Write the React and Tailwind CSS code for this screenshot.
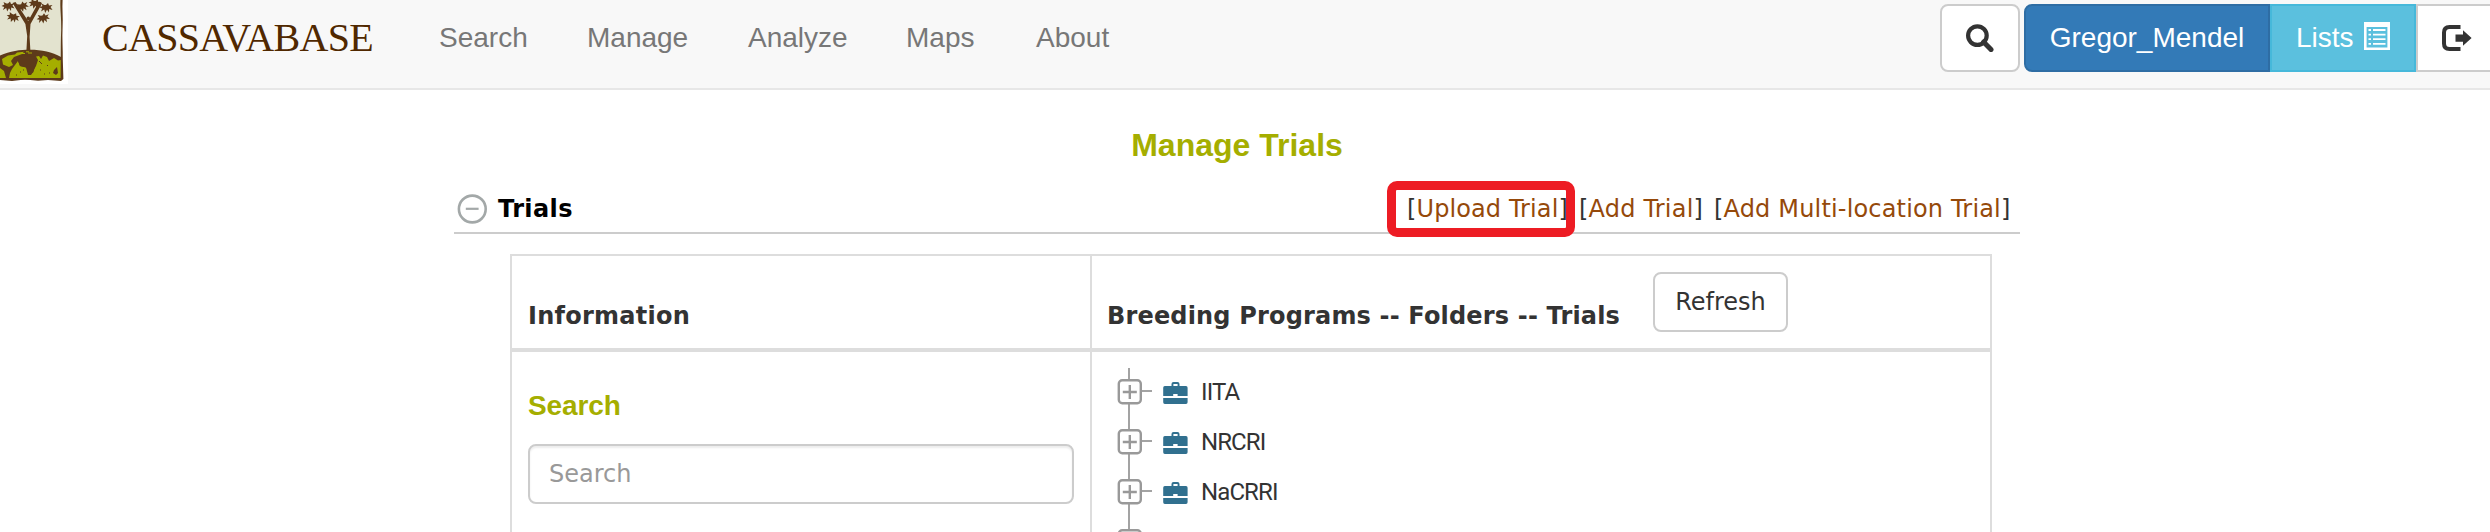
import React from "react";

const SANS = "font-['Liberation_Sans',Arial,sans-serif]";

function Leaf({ x, y, r = 0 }) {
  return (
    <g transform={`translate(${x} ${y}) rotate(${r})`} fill="#5d3a1a">
      <path d="M0 -2.5 L2 -4.5 L3 -2 L6.5 -2.5 L4.5 -0.5 L6.5 2.5 L3.2 1.5 L3 5 L1 2.2 L-0.8 5.4 L-1.8 2 L-5 4 L-3.8 1 L-6.5 0 L-3.6 -1.4 L-4.5 -4 L-1.6 -2.6 Z" />
    </g>
  );
}

function Logo() {
  return (
    <svg width="68" height="84" viewBox="0 0 68 84" className="block shrink-0">
      <rect width="68" height="84" fill="#fff" />
      <rect width="62" height="80" fill="#e3e3cf" />
      <path d="M0 55.5 C10 51 20 49.8 30 49.8 C42 49.8 52 52 61 57 L62 79.5 L0 79.5 Z" fill="#5d3a1a" />
      <path
        d="M8 55.5 L15 54.5 L17 52.5 L24 51.8 L22 54 L14 57 L11 61 L13 65 L9 67 L3 64.5 L2 59 Z M0 68 L4 71 L6 78 L0 78 Z M12 69 L18 61 L20 66 L26 67.5 L28 75 L31 75 L36 66 L38 60 L36 56.5 L39 56 L41 59 L43 55.5 L47 57 L49 61 L54 58 L58 60.5 L61 60 L61 78 L9 78 L10 73 Z"
        fill="#a5ae00"
      />
      <path d="M19 57 L25 55 L30 57 L34 56 L36 62 L35 66 L33.5 72 L31 74.5 L28.5 74 L26.5 67.5 L20 66 L18 61 Z M54 70 L57 67 L58 73 L56 75 L53 73 Z" fill="#5d3a1a" />
      <path d="M39 61 l3 3 M40 70 l1 0 M47 65 l1 1 M44 74 l1 0 M20 72 l1 0 M16 75 l1 0 M49 73 l1 0 M23 70 l1 0" stroke="#5d3a1a" strokeWidth="1" />
      <path d="M22 53.5 h3 M28 53 h4 M26 51.8 h3" stroke="#a5ae00" strokeWidth="1" />
      <path d="M26.4 51 L27.2 36 L25.4 24 L12.5 3 L15.5 2 L28.2 21 L39 1.5 L42 3.5 L30.5 24 L29.6 37 L30.4 51 Z" fill="#5d3a1a" />
      <circle cx="28.3" cy="18.4" r="1.8" fill="#5d3a1a" />
      <Leaf x={8} y={6} />
      <Leaf x={13} y={17} r={15} />
      <Leaf x={22} y={6.5} r={-20} />
      <Leaf x={35} y={3.5} r={10} />
      <Leaf x={46} y={7.5} />
      <Leaf x={43} y={18} r={-12} />
      <path d="M60.4 0 L62.6 0 C62 8 63.2 18 62.6 27 C62 38 63 50 62.8 60 L63.4 79 L61 81 L48 80 L38 80.7 L25 79.6 L12 81 L0 80 L0 78 L14 78.6 L30 78 L45 78.3 L60.6 78 C61 60 60.5 45 61.2 30 C61.6 18 60 10 60.4 0 Z" fill="#5d3a1a" />
    </svg>
  );
}

function SearchIcon() {
  return (
    <svg width="28" height="28" viewBox="0 0 28 28" className="block">
      <circle cx="11.4" cy="11.6" r="9.3" fill="none" stroke="#333" strokeWidth="4.2" />
      <path d="M17.6 18 L25 25.6" stroke="#333" strokeWidth="5" strokeLinecap="round" />
    </svg>
  );
}

function ListIcon() {
  return (
    <svg width="26" height="28" viewBox="0 0 26 28" className="block">
      <path d="M0 0 H26 V28 H0 Z M2.6 5 V25.4 H23.4 V5 Z" fill="#fff" fillRule="evenodd" />
      <path d="M4.5 8 h2.5 M4.5 12.6 h2.5 M4.5 17.2 h2.5 M4.5 21.8 h2.5 M9 8 h12.5 M9 12.6 h12.5 M9 17.2 h12.5 M9 21.8 h12.5" stroke="#fff" strokeWidth="1.8" />
    </svg>
  );
}

function LogoutIcon() {
  return (
    <svg width="30" height="26" viewBox="0 0 30 26" className="block">
      <path d="M18.5 2 H7.5 Q2 2 2 7.5 V18.5 Q2 24 7.5 24 H18.5" fill="none" stroke="#333" strokeWidth="4" />
      <path d="M13.5 9.5 H21 V5.2 L29.6 13 L21 20.8 V16.8 H13.5 Z" fill="#333" />
    </svg>
  );
}

function Briefcase() {
  return (
    <svg width="25" height="22" viewBox="0 0 25 22" className="block">
      <path
        d="M8.5 4 V2 Q8.5 0 10.5 0 H14.5 Q16.5 0 16.5 2 V4 H23 Q24.6 4 24.6 5.8 V14 H14.6 V12 H10.2 V14 H0.2 V5.8 Q0.2 4 1.8 4 Z M10.4 4 H14.6 V1.9 H10.4 Z M0.2 16 H24.6 V20.2 Q24.6 22 23 22 H1.8 Q0.2 22 0.2 20.2 Z"
        fill="#31708f"
        fillRule="evenodd"
      />
    </svg>
  );
}

function TreeNode({ label }) {
  return (
    <li className="flex h-[50px]">
      <svg width="36" height="50" viewBox="0 0 36 50" className="block shrink-0">
        <path d="M13 0 V50 M26 23 H36" stroke="#a3a3a3" strokeWidth="2" />
        <rect x="2.8" y="12.2" width="22" height="23" rx="3.5" fill="#fff" stroke="#999" strokeWidth="2.4" />
        <path d="M13.8 17 V31 M6.8 24 H20.8" stroke="#999" strokeWidth="2.4" />
      </svg>
      <span className="ml-[11px] mt-[14px]">
        <Briefcase />
      </span>
      <span className="ml-[13px] mt-2 whitespace-nowrap font-[Roboto,sans-serif] text-2xl leading-8 tracking-[-0.9px] text-[#333]">{label}</span>
    </li>
  );
}

function NavItem({ label, width }) {
  return <a className={`block whitespace-nowrap ${width}`}>{label}</a>;
}

export default function App() {
  return (
    <div className="h-[532px] w-[2490px] overflow-hidden bg-white font-['DejaVu_Sans',Verdana,sans-serif] text-2xl leading-8 text-[#333]">
      <header className={`flex h-[90px] items-start border-b-2 border-[#e7e7e7] bg-[#f8f8f8] text-[28px] ${SANS}`}>
        <Logo />
        <div className="ml-[34px] flex h-[76px] w-[337px] items-center whitespace-nowrap font-['Liberation_Serif',serif] text-[40px] tracking-[-0.7px] text-[#502800]">
          CASSAVABASE
        </div>
        <nav className="flex h-[76px] items-center text-[#777]">
          <NavItem label="Search" width="w-[148px]" />
          <NavItem label="Manage" width="w-[161px]" />
          <NavItem label="Analyze" width="w-[158px]" />
          <NavItem label="Maps" width="w-[130px]" />
          <NavItem label="About" width="w-[80px]" />
        </nav>
        <div className="ml-auto flex h-[76px] items-center text-white">
          <button className="mr-1 flex h-[68px] w-20 items-center justify-center rounded-lg border-2 border-[#ccc] bg-white">
            <SearchIcon />
          </button>
          <button className="flex h-[68px] w-[246px] items-center justify-center rounded-l-lg border-2 border-[#2e6da4] bg-[#337ab7]">
            Gregor_Mendel
          </button>
          <button className="flex h-[68px] w-[146px] items-center border-2 border-[#46b8da] bg-[#5bc0de] pl-6">
            <span className="w-[68px] text-left">Lists</span>
            <span className="-mt-1">
              <ListIcon />
            </span>
          </button>
          <button className="flex h-[68px] w-[74px] items-center border-y-2 border-l-2 border-[#ccc] bg-white pl-6">
            <LogoutIcon />
          </button>
        </div>
      </header>

      <main className="ml-[454px] w-[1566px] pt-[35px]">
        <h1 className={`text-center text-[32px] font-bold leading-10 text-[#a5ae00] ${SANS}`}>Manage Trials</h1>

        <div className="relative mt-7 flex h-[41px] border-b-2 border-[#ccc]">
          <svg width="30" height="30" viewBox="0 0 30 30" className="ml-[3px] mt-[1px] block">
            <circle cx="15.3" cy="15" r="13.4" fill="none" stroke="#a3a8a8" strokeWidth="2.6" />
            <path d="M8.8 14.8 H21.6" stroke="#a3a8a8" strokeWidth="2.2" />
          </svg>
          <h2 className="ml-[11px] font-bold tracking-[0.4px] text-black">Trials</h2>
          <div className="ml-auto flex whitespace-nowrap pr-[9px] text-[#333]">
            <span className="w-[172px] tracking-[0.1px]">
              [<a className="text-[#95490a]">Upload Trial</a>]
            </span>
            <span className="w-[135px] tracking-[0.2px]">
              [<a className="text-[#95490a]">Add Trial</a>]
            </span>
            <span className="w-[297px] tracking-[0.17px]">
              [<a className="text-[#95490a]">Add Multi-location Trial</a>]
            </span>
          </div>
          <div className="absolute left-[933px] top-[-12px] h-14 w-[188px] rounded-[10px] border-[9px] border-[#ed1c24]" />
        </div>

        <section className="ml-14 mt-5 grid h-[400px] w-[1482px] grid-cols-[580px_1fr] grid-rows-[96px_1fr] border-2 border-[#ddd]">
          <div className="border-b-4 border-r-2 border-[#ddd] pl-4 pt-11 font-bold">
            <span className="tracking-[0.25px]">Information</span>
          </div>
          <div className="flex border-b-4 border-[#ddd] pl-[15px]">
            <span className="w-[546px] whitespace-nowrap pt-11 font-bold tracking-[0.17px]">Breeding Programs -- Folders -- Trials</span>
            <button className="mt-4 flex h-[60px] w-[135px] justify-center rounded-lg border-2 border-[#ccc] pt-[12px] leading-8">Refresh</button>
          </div>
          <div className="border-r-2 border-[#ddd] pl-4 pt-9">
            <h3 className={`text-[28px] font-bold leading-9 tracking-[-0.1px] text-[#a5ae00] ${SANS}`}>Search</h3>
            <div className="mt-5 h-[60px] w-[546px] rounded-lg border-2 border-[#ccc] pl-[19px] pt-[12px] text-[#999] shadow-[inset_0_2px_2px_rgba(0,0,0,0.075)]">
              Search
            </div>
          </div>
          <ul className="pl-6 pt-4">
            <TreeNode label="IITA" />
            <TreeNode label="NRCRI" />
            <TreeNode label="NaCRRI" />
            <TreeNode label="" />
          </ul>
        </section>
      </main>
    </div>
  );
}
